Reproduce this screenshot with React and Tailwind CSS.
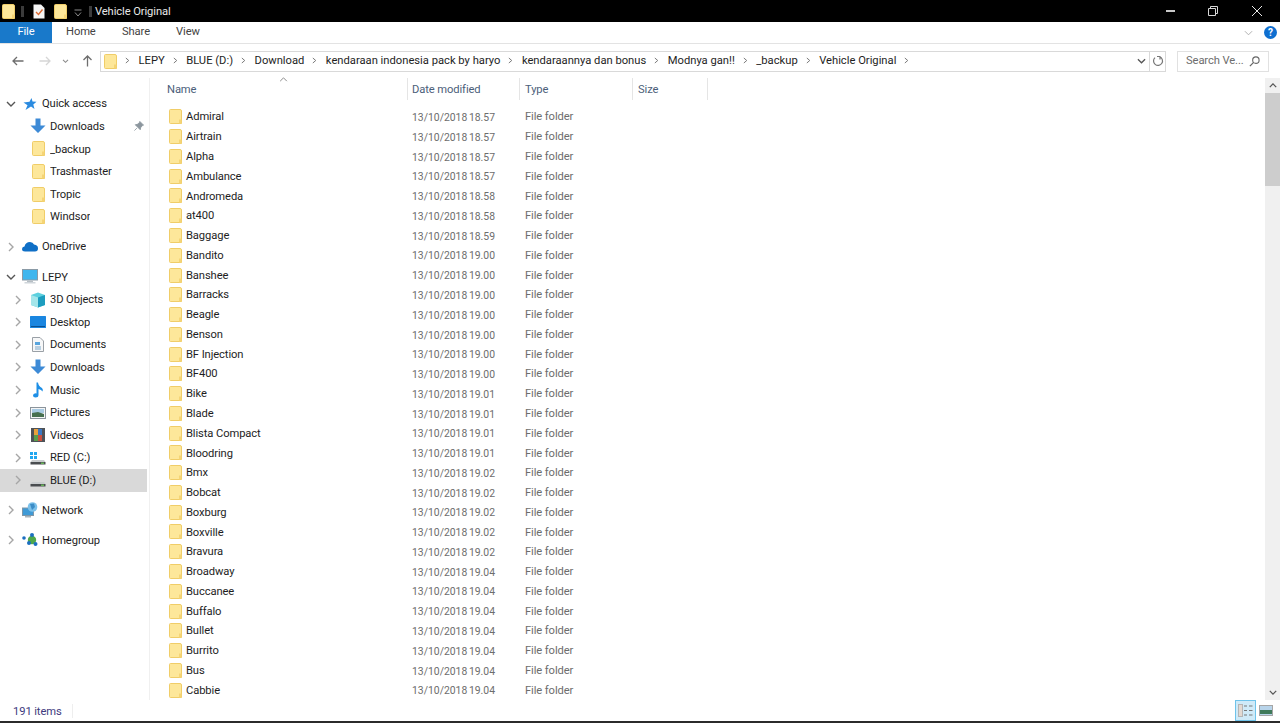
import React from 'react';

const folders = [
  ['Admiral', '18.57'], ['Airtrain', '18.57'], ['Alpha', '18.57'], ['Ambulance', '18.57'], ['Andromeda', '18.58'],
  ['at400', '18.58'], ['Baggage', '18.59'], ['Bandito', '19.00'], ['Banshee', '19.00'], ['Barracks', '19.00'],
  ['Beagle', '19.00'], ['Benson', '19.00'], ['BF Injection', '19.00'], ['BF400', '19.00'], ['Bike', '19.01'],
  ['Blade', '19.01'], ['Blista Compact', '19.01'], ['Bloodring', '19.01'], ['Bmx', '19.02'], ['Bobcat', '19.02'],
  ['Boxburg', '19.02'], ['Boxville', '19.02'], ['Bravura', '19.02'], ['Broadway', '19.04'], ['Buccanee', '19.04'],
  ['Buffalo', '19.04'], ['Bullet', '19.04'], ['Burrito', '19.04'], ['Bus', '19.04'], ['Cabbie', '19.04'],
];

const crumbs = ['LEPY', 'BLUE (D:)', 'Download', 'kendaraan indonesia pack by haryo', 'kendaraannya dan bonus', 'Modnya gan!!', '_backup', 'Vehicle Original'];

const Folder = ({ className = 'w-[13px] h-[15px]' }) => (
  <svg viewBox="0 0 13 15" className={className}>
    <path d="M0.5 1.5Q0.5 0.5 1.5 0.5H11Q12.5 0.5 12.5 2V14.5H1.5Q0.5 14.5 0.5 13.5Z" fill="#fde79a" stroke="#f0cd68" />
    <path d="M10 14.5V10.5H12.5V14.5Z" fill="#f5d476" />
  </svg>
);

const Chevron = ({ open, dark }) => (
  <svg viewBox="0 0 10 10" className="w-[10px] h-[10px] shrink-0">
    <path
      d={open ? 'M1 3L5 7L9 3' : 'M3 1L7 5L3 9'}
      fill="none"
      stroke={dark ? '#555555' : '#a6a6a6'}
      strokeWidth="1.4"
    />
  </svg>
);

const Star = () => (
  <svg viewBox="0 0 14 14" className="w-[14px] h-[14px]">
    <path d="M8.5 1L9.5 4.6L13.5 4.8L10.3 7.4L11.5 12L8 9.4L2.5 13L4.5 8.2L0.5 5.5L6.5 4.8Z" fill="#2b8be0" />
  </svg>
);

const Down = () => (
  <svg viewBox="0 0 16 16" className="w-[16px] h-[16px]">
    <path d="M5.5 0.5H10.5V7.5H15.5L8 15L0.5 7.5H5.5Z" fill="#3d8ad6" />
  </svg>
);

const Cloud = () => (
  <svg viewBox="0 0 16 11" className="w-[16px] h-[11px]">
    <path d="M3 10.5Q0 10.5 0 8Q0 6 2.5 5.6Q3.5 1 8 1Q11 1 12 3.6Q16 4 16 7.5Q16 10.5 13 10.5Z" fill="#0f6fc6" />
  </svg>
);

const Pc = () => (
  <svg viewBox="0 0 16 15" className="w-[16px] h-[15px]">
    <rect x="0.5" y="0.5" width="15" height="10.5" fill="#3fb6ee" stroke="#8a9aa6" />
    <rect x="5" y="11.5" width="6" height="1.5" fill="#b6bec4" />
    <rect x="2.5" y="13" width="11" height="1.5" fill="#cfd5da" />
  </svg>
);

const Cube = () => (
  <svg viewBox="0 0 16 16" className="w-[16px] h-[16px]">
    <path d="M8 0.5L15 3V13L8 15.5L1 13V3Z" fill="#5cd0de" />
    <path d="M1 3L8 5.5V15.5L1 13Z" fill="#a4e6ea" />
    <path d="M8 5.5L15 3V13L8 15.5Z" fill="#1d9dbf" />
  </svg>
);

const Desktop = () => (
  <svg viewBox="0 0 16 12" className="w-[16px] h-[12px]">
    <rect x="0" y="0" width="16" height="12" rx="0.5" fill="#1a86e0" />
    <rect x="1" y="10" width="14" height="1" fill="#0c4f8e" />
  </svg>
);

const Docs = () => (
  <svg viewBox="0 0 12 15" className="w-[12px] h-[15px]">
    <path d="M0.5 0.5H8L11.5 4V14.5H0.5Z" fill="#f6f7f8" stroke="#9aa0a6" />
    <rect x="3" y="5" width="5" height="3" fill="#58a5de" />
    <rect x="3" y="9.5" width="6" height="1" fill="#7aa7c9" />
    <rect x="3" y="11.5" width="6" height="1" fill="#7aa7c9" />
  </svg>
);

const Music = () => (
  <svg viewBox="0 0 12 16" className="w-[12px] h-[16px]">
    <path d="M4.5 0.5H6Q6.5 4 10 6Q11.5 7.5 10.5 9.5Q9.5 7.5 6.5 7V13Q6.5 15.5 3.5 15.5Q1 15.5 1 13.5Q1 11.5 3.5 11.3Q4 11.3 4.5 11.5Z" fill="#1e8fe6" />
  </svg>
);

const Pictures = () => (
  <svg viewBox="0 0 16 12" className="w-[16px] h-[12px]">
    <rect x="0.5" y="0.5" width="15" height="11" fill="#f4f5f6" stroke="#8b949b" />
    <rect x="2" y="2" width="12" height="4" fill="#a9cbe3" />
    <path d="M2 6L8 5L14 7V10H2Z" fill="#47704f" />
  </svg>
);

const Videos = () => (
  <svg viewBox="0 0 14 14" className="w-[14px] h-[14px]">
    <rect width="14" height="14" fill="#4e5257" />
    <rect x="3" y="1" width="4" height="6" fill="#e9a13b" />
    <rect x="7" y="1" width="4" height="6" fill="#3b78c4" />
    <rect x="3" y="7" width="4" height="6" fill="#5a9e4b" />
    <rect x="7" y="7" width="4" height="6" fill="#c9503f" />
  </svg>
);

const Drive = ({ win }) => (
  <svg viewBox="0 0 16 14" className="w-[16px] h-[14px]">
    {win && <path d="M0 1H3V4H0ZM4 1H7V4H4ZM0 5H3V8H0ZM4 5H7V8H4Z" fill="#22a7f0" />}
    <path d="M2 9H14L15.5 11H0.5Z" fill="#c9ccce" />
    <rect x="0.5" y="11" width="15" height="2.5" fill="#4a4d50" />
    <rect x="11" y="11.6" width="3" height="1.2" fill="#6fce5a" />
  </svg>
);

const Net = () => (
  <svg viewBox="0 0 16 16" className="w-[16px] h-[16px]">
    <rect x="0.5" y="6" width="11" height="7.5" fill="#3f9ad6" stroke="#7f97a8" />
    <rect x="3" y="14" width="6" height="1.5" fill="#a9b4bb" />
    <circle cx="10.5" cy="5" r="4.8" fill="#7cc1ea" />
    <path d="M8 2L12 1.5L13 5L10 8Z" fill="#3c8dc7" />
  </svg>
);

const Home = () => (
  <svg viewBox="0 0 16 14" className="w-[16px] h-[14px]">
    <circle cx="2" cy="5" r="1.8" fill="#1c6fc0" />
    <circle cx="10" cy="7" r="4.2" fill="#4fa84a" />
    <circle cx="10" cy="2" r="2" fill="#1c6fc0" />
    <circle cx="7" cy="10" r="2" fill="#1c6fc0" />
    <circle cx="13.5" cy="11" r="2" fill="#1c6fc0" />
  </svg>
);

const NavRow = ({ label, icon, chevron, open, indent, selected, pin, className = '' }) => (
  <div className={`flex items-center h-[22.6px] w-[147px] ${indent ? 'pl-[13px]' : 'pl-[6px]'} ${selected ? 'bg-[#d9d9d9]' : ''} ${className}`}>
    <div className="w-[10px] shrink-0 flex">{chevron ? <Chevron open={open} dark={open} /> : null}</div>
    <div className={`w-[16px] flex justify-center shrink-0 ${indent ? 'ml-[7px]' : 'ml-[6px]'}`}>{icon}</div>
    <span className="ml-[4px] pt-[2px] text-[#1e1e1e] truncate">{label}</span>
    {pin ? (
      <svg viewBox="0 0 12 12" className="w-[10px] h-[10px] ml-auto mr-[3px]">
        <path d="M7 0.5L11.5 5L10 5.5L8 8L7.5 10.5L1.5 4.5L4 4L6.5 2Z M3.5 8.5L0.5 11.5" fill="#8c969e" stroke="#8c969e" />
      </svg>
    ) : null}
  </div>
);

const Header = ({ label, className }) => (
  <div className={`flex items-center h-[22px] pt-[3px] border-r border-[#e5e5e5] text-[#4c607a] ${className}`}>{label}</div>
);

export default function App() {
  return (
    <div className="h-[723px] w-[1280px] bg-white overflow-hidden flex flex-col text-[11.2px] tracking-[-0.1px] font-['Roboto','Open_Sans',sans-serif]">
      {/* title bar */}
      <div className="h-[22px] bg-black flex items-center text-[#e8e8e8] shrink-0">
        <div className="ml-[2px] flex"><Folder /></div>
        <div className="ml-[6px] w-[3px] h-[11px] bg-[#3b3b3b]" />
        <svg viewBox="0 0 12 15" className="w-[12px] h-[15px] ml-[9px]">
          <path d="M0.5 0.5H8L11.5 4V14.5H0.5Z" fill="#f5f5f5" />
          <path d="M3 8L5.5 10.5L9.5 5.5" fill="none" stroke="#dc6a32" strokeWidth="1.4" />
        </svg>
        <div className="ml-[9px] flex"><Folder /></div>
        <svg viewBox="0 0 8 8" className="w-[8px] h-[8px] ml-[7px] mt-[3px]">
          <path d="M0.5 1H7.5M1 3.5L4 7L7 3.5" fill="none" stroke="#8c8c8c" />
        </svg>
        <div className="ml-[7px] w-[3px] h-[11px] bg-[#3b3b3b]" />
        <span className="ml-[3px] pt-[2px]">Vehicle Original</span>
        <div className="ml-auto flex items-center">
          <div className="w-[9px] h-[1.5px] bg-[#c8c8c8] mr-[33px]" />
          <svg viewBox="0 0 10 10" className="w-[10px] h-[10px] mr-[34px]">
            <path d="M0.5 2.5H7.5V9.5H0.5ZM2.5 2.5V0.5H9.5V7.5H7.5" fill="none" stroke="#d8d8d8" />
          </svg>
          <svg viewBox="0 0 10 10" className="w-[10px] h-[10px] mr-[18px]">
            <path d="M0 0L10 10M10 0L0 10" stroke="#e8e8e8" />
          </svg>
        </div>
      </div>

      {/* ribbon tabs */}
      <div className="h-[22px] flex items-center border-b border-[#e3e3e3] shrink-0 text-[#444444]">
        <div className="w-[52px] h-full bg-[#1979ca] text-white flex items-center justify-center">File</div>
        <span className="ml-[14px] w-[29px]">Home</span>
        <span className="ml-[27px] w-[27px]">Share</span>
        <span className="ml-[27px]">View</span>
        <div className="ml-auto flex items-center">
          <svg viewBox="0 0 10 6" className="w-[9px] h-[6px] mr-[11px]">
            <path d="M1 1L5 5L9 1" fill="none" stroke="#a8a8a8" />
          </svg>
          <div className="w-[13px] h-[13px] mr-[3px] rounded-full bg-[#0f6fd0] text-white text-[10px] font-bold flex items-center justify-center">?</div>
        </div>
      </div>

      {/* address row */}
      <div className="h-[34px] flex items-center shrink-0">
        <svg viewBox="0 0 12 10" className="w-[12px] h-[10px] ml-[12px]">
          <path d="M11.5 5H1M5 1L1 5L5 9" fill="none" stroke="#6e6e6e" strokeWidth="1.3" />
        </svg>
        <svg viewBox="0 0 12 10" className="w-[12px] h-[10px] ml-[15px]">
          <path d="M0.5 5H11M7 1L11 5L7 9" fill="none" stroke="#d6d6d6" strokeWidth="1.3" />
        </svg>
        <svg viewBox="0 0 8 6" className="w-[7px] h-[5px] ml-[11px]">
          <path d="M1 1L4 4L7 1" fill="none" stroke="#8c8c8c" strokeWidth="1.3" />
        </svg>
        <svg viewBox="0 0 10 12" className="w-[11px] h-[12px] ml-[13px]">
          <path d="M5 11.5V1M1 5L5 1L9 5" fill="none" stroke="#6e6e6e" strokeWidth="1.3" />
        </svg>
        <div className="ml-[7px] w-[1066px] h-[21px] border border-[#d9d9d9] flex items-center text-[#1e1e1e] tracking-normal">
          <div className="ml-[3px] flex"><Folder /></div>
          <div className="flex items-center">
            {crumbs.map((c) => (
              <div key={c} className="flex items-center">
                <svg viewBox="0 0 6 8" className="w-[5px] h-[7px] ml-[8px] mr-[8.5px]">
                  <path d="M1 1L4.5 4L1 7" fill="none" stroke="#7a7a7a" strokeWidth="1.2" />
                </svg>
                <span className="whitespace-nowrap">{c}</span>
              </div>
            ))}
            <svg viewBox="0 0 6 8" className="w-[5px] h-[7px] ml-[8px]">
              <path d="M1 1L4.5 4L1 7" fill="none" stroke="#7a7a7a" strokeWidth="1.2" />
            </svg>
          </div>
          <svg viewBox="0 0 10 6" className="w-[9px] h-[6px] ml-auto mr-[3px]">
            <path d="M1 1L5 5L9 1" fill="none" stroke="#555555" strokeWidth="1.4" />
          </svg>
          <div className="w-[16px] h-full border-l border-[#d9d9d9] flex items-center justify-center">
            <svg viewBox="0 0 12 12" className="w-[12px] h-[12px]">
              <path d="M5 1.5H8V4.5M7.8 1.8A4.5 4.5 0 1 1 3 2.6" fill="none" stroke="#777777" strokeWidth="1.2" />
            </svg>
          </div>
        </div>
        <div className="ml-[11px] w-[92px] h-[21px] border border-[#e1e1e1] flex items-center justify-between px-[8px] text-[#6d6d6d]">
          <span className="whitespace-nowrap">Search Ve...</span>
          <svg viewBox="0 0 12 12" className="w-[11px] h-[11px] shrink-0">
            <circle cx="7.5" cy="4.5" r="3.5" fill="none" stroke="#666666" strokeWidth="1.2" />
            <path d="M5 7L1 11" stroke="#666666" strokeWidth="1.4" />
          </svg>
        </div>
      </div>

      {/* main */}
      <div className="flex-1 flex min-h-0">
        <div className="w-[150px] shrink-0 border-r border-[#f0f0f0] pt-[14.5px]">
          <NavRow label="Quick access" icon={<Star />} chevron open />
          <NavRow label="Downloads" icon={<Down />} indent pin />
          <NavRow label="_backup" icon={<Folder />} indent />
          <NavRow label="Trashmaster" icon={<Folder />} indent />
          <NavRow label="Tropic" icon={<Folder />} indent />
          <NavRow label="Windsor" icon={<Folder />} indent />
          <NavRow label="OneDrive" icon={<Cloud />} chevron className="mt-[7.5px]" />
          <NavRow label="LEPY" icon={<Pc />} chevron open className="mt-[7.5px]" />
          <NavRow label="3D Objects" icon={<Cube />} chevron indent />
          <NavRow label="Desktop" icon={<Desktop />} chevron indent />
          <NavRow label="Documents" icon={<Docs />} chevron indent />
          <NavRow label="Downloads" icon={<Down />} chevron indent />
          <NavRow label="Music" icon={<Music />} chevron indent />
          <NavRow label="Pictures" icon={<Pictures />} chevron indent />
          <NavRow label="Videos" icon={<Videos />} chevron indent />
          <NavRow label="RED (C:)" icon={<Drive win />} chevron indent />
          <NavRow label="BLUE (D:)" icon={<Drive />} chevron indent selected />
          <NavRow label="Network" icon={<Net />} chevron className="mt-[7.5px]" />
          <NavRow label="Homegroup" icon={<Home />} chevron className="mt-[7.5px]" />
        </div>

        <div className="flex-1 min-w-0 pl-[7px]">
          <div className="relative flex">
            <svg viewBox="0 0 10 6" className="absolute left-[122px] top-[-1px] w-[9px] h-[5px]">
              <path d="M1 5L5 1L9 5" fill="none" stroke="#8c8c8c" strokeWidth="1.2" />
            </svg>
            <Header label="Name" className="w-[251px] pl-[10px]" />
            <Header label="Date modified" className="w-[112px] pl-[4px]" />
            <Header label="Type" className="w-[113px] pl-[5px]" />
            <Header label="Size" className="w-[75px] pl-[5px]" />
          </div>
          <div className="pt-[7px]">
            {folders.map(([name, time]) => (
              <div key={name} className="flex items-center h-[19.77px]">
                <div className="w-[251px] flex items-center pl-[12px]">
                  <Folder />
                  <span className="ml-[4px] pt-[2px] text-[#1e1e1e] whitespace-nowrap">{name}</span>
                </div>
                <div className="w-[113px] pl-[4px] pt-[2px] text-[10.4px] tracking-normal [word-spacing:-1px] text-[#6d6d6d] whitespace-nowrap">13/10/2018 {time}</div>
                <div className="pl-[4px] pt-[2px] text-[#6d6d6d]">File folder</div>
              </div>
            ))}
          </div>
        </div>

        {/* scrollbar */}
        <div className="w-[15px] shrink-0 bg-[#f0f0f0] flex flex-col">
          <div className="h-[15px] flex items-center justify-center">
            <svg viewBox="0 0 10 6" className="w-[8px] h-[5px]">
              <path d="M1 5L5 1L9 5" fill="none" stroke="#555555" strokeWidth="1.6" />
            </svg>
          </div>
          <div className="h-[93px] bg-[#cdcdcd]" />
          <div className="flex-1" />
          <div className="h-[15px] flex items-center justify-center">
            <svg viewBox="0 0 10 6" className="w-[8px] h-[5px]">
              <path d="M1 1L5 5L9 1" fill="none" stroke="#555555" strokeWidth="1.6" />
            </svg>
          </div>
        </div>
      </div>

      {/* status bar */}
      <div className="h-[21px] flex items-center shrink-0">
        <span className="ml-[13px] pt-[3px] text-[#3e3a7e]">191 items</span>
        <div className="ml-[10px] w-px h-[14px] bg-[#eeeeee]" />
        <div className="ml-auto flex items-center mr-[7px] h-full">
          <div className="w-[21px] h-full border border-[#6fc3ea] bg-[#cfeaf8] flex items-center justify-center">
            <svg viewBox="0 0 15 13" className="w-[15px] h-[13px]">
              <rect x="0.5" y="0.5" width="4" height="12" fill="#e3d9d2" stroke="#b5b5b5" />
              <path d="M6 2H9M11 2H14.5M6 6.5H9M11 6.5H14.5M6 11H9M11 11H14.5" stroke="#777777" strokeWidth="1.2" />
            </svg>
          </div>
          <div className="ml-[3px] w-[14px] h-[11px] border border-[#a6a6a6] bg-[#b8d4ea]">
            <div className="h-[4px] mt-[4px] bg-[#3f7a5a]" />
          </div>
        </div>
      </div>
      <div className="h-[2px] bg-[#2b2b2b] shrink-0" />
    </div>
  );
}
